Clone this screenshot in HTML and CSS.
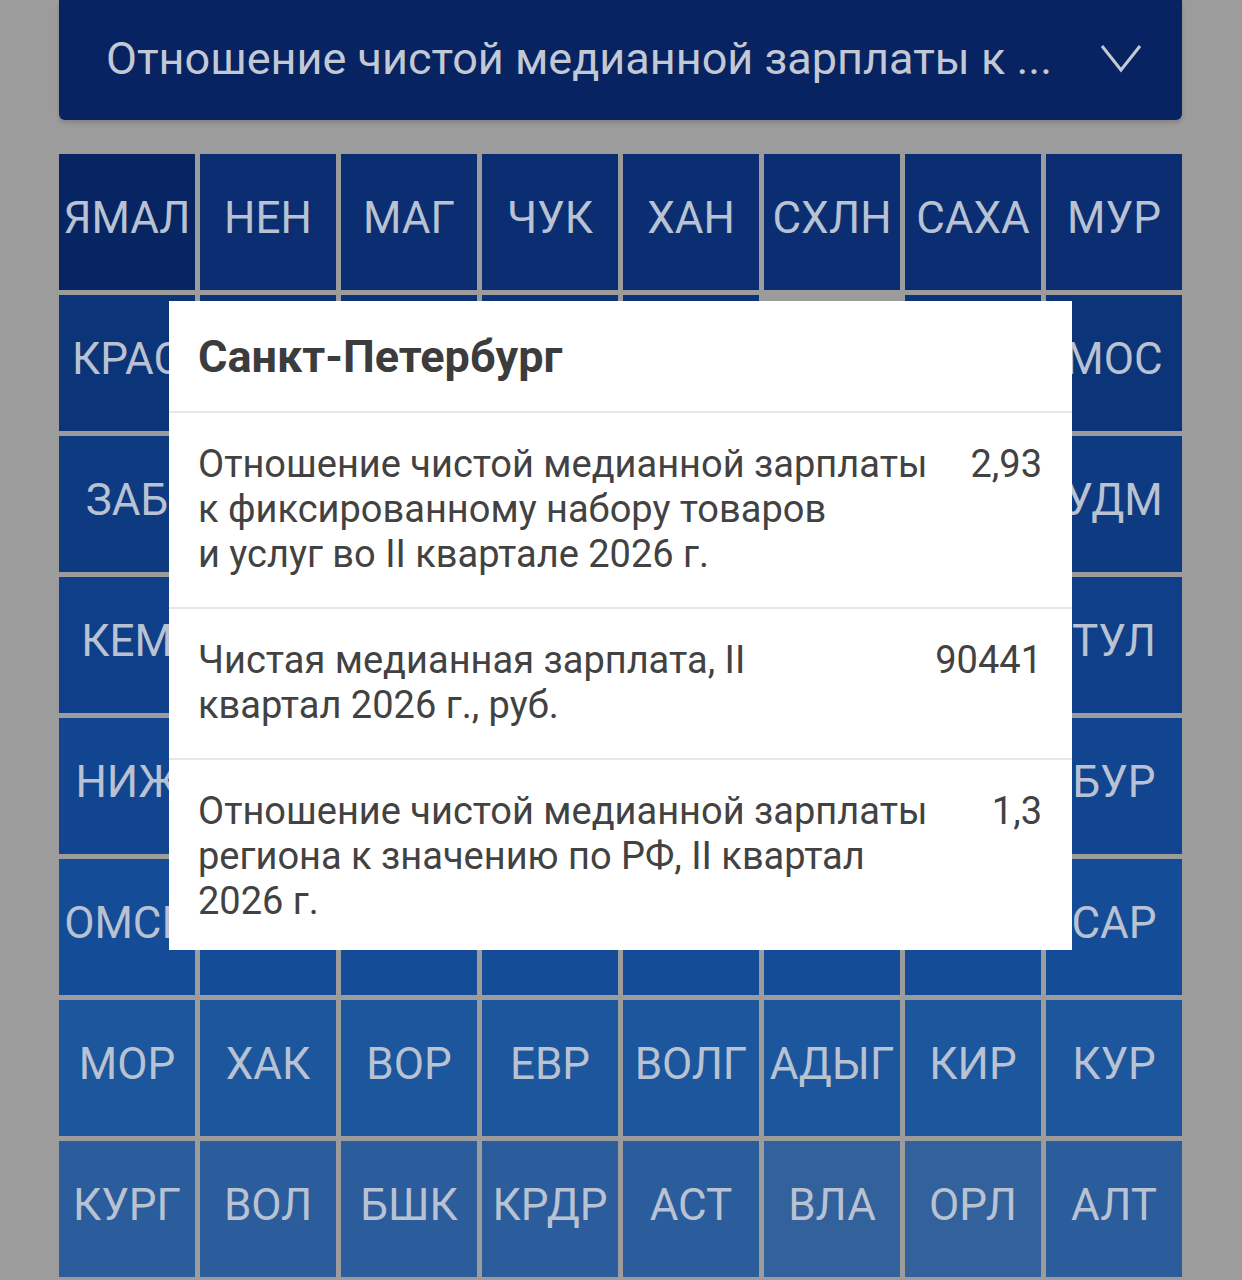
FILE: index.html
```html
<!DOCTYPE html>
<html lang="ru">
<head>
    <meta charset="UTF-8">
    <meta name="viewport" content="width=device-width, initial-scale=1.0">
    <title>Зарплаты по регионам</title>
    <link rel="stylesheet" href="styles.css">
</head>
<body>
    <div class="screen">
        <div class="select-bar">
            <span class="select-text">Отношение чистой медианной зарплаты к ...</span>
            <svg class="chevron" width="42" height="30" viewBox="0 0 42 30">
                <polyline points="2,3 21,27 40,3" fill="none" stroke="currentColor" stroke-width="3"/>
            </svg>
        </div>

        <div class="tiles">
            <div class="tile lvl-0">ЯМАЛ</div>
            <div class="tile lvl-1">НЕН</div>
            <div class="tile lvl-1">МАГ</div>
            <div class="tile lvl-1">ЧУК</div>
            <div class="tile lvl-1">ХАН</div>
            <div class="tile lvl-1">СХЛН</div>
            <div class="tile lvl-1">САХА</div>
            <div class="tile lvl-1">МУР</div>

            <div class="tile lvl-2">КРАС</div>
            <div class="tile lvl-2">ТЮМ</div>
            <div class="tile lvl-2">КАМ</div>
            <div class="tile lvl-2">МСК</div>
            <div class="tile lvl-2">КОМИ</div>
            <div class="tile selected">СПБ</div>
            <div class="tile lvl-2">ЛЕН</div>
            <div class="tile lvl-2">МОС</div>

            <div class="tile lvl-3">ЗАБ</div>
            <div class="tile lvl-3">ИРК</div>
            <div class="tile lvl-3">ТОМ</div>
            <div class="tile lvl-3">КАР</div>
            <div class="tile lvl-3">АРХ</div>
            <div class="tile lvl-3">ТАТ</div>
            <div class="tile lvl-3">СВЕР</div>
            <div class="tile lvl-3">УДМ</div>

            <div class="tile lvl-4">КЕМ</div>
            <div class="tile lvl-4">НОВ</div>
            <div class="tile lvl-4">КАЛ</div>
            <div class="tile lvl-4">ПЕРМ</div>
            <div class="tile lvl-4">ЧЕЛ</div>
            <div class="tile lvl-4">ВЛГ</div>
            <div class="tile lvl-4">КЛГ</div>
            <div class="tile lvl-4">ТУЛ</div>

            <div class="tile lvl-5">НИЖ</div>
            <div class="tile lvl-5">ЯРО</div>
            <div class="tile lvl-5">САМ</div>
            <div class="tile lvl-5">ЛИП</div>
            <div class="tile lvl-5">ПРИМ</div>
            <div class="tile lvl-5">ХАБ</div>
            <div class="tile lvl-5">АМУР</div>
            <div class="tile lvl-5">БУР</div>

            <div class="tile lvl-6">ОМСК</div>
            <div class="tile lvl-6">БЕЛ</div>
            <div class="tile lvl-6">ТВЕР</div>
            <div class="tile lvl-6">РЯЗ</div>
            <div class="tile lvl-6">ВЛАД</div>
            <div class="tile lvl-6">ОРЕН</div>
            <div class="tile lvl-6">ПСК</div>
            <div class="tile lvl-6">САР</div>

            <div class="tile lvl-7">МОР</div>
            <div class="tile lvl-7">ХАК</div>
            <div class="tile lvl-7">ВОР</div>
            <div class="tile lvl-7">ЕВР</div>
            <div class="tile lvl-7">ВОЛГ</div>
            <div class="tile lvl-7">АДЫГ</div>
            <div class="tile lvl-7">КИР</div>
            <div class="tile lvl-7">КУР</div>

            <div class="tile lvl-8">КУРГ</div>
            <div class="tile lvl-8">ВОЛ</div>
            <div class="tile lvl-8">БШК</div>
            <div class="tile lvl-8">КРДР</div>
            <div class="tile lvl-8">АСТ</div>
            <div class="tile lvl-9">ВЛА</div>
            <div class="tile lvl-9">ОРЛ</div>
            <div class="tile lvl-8">АЛТ</div>
        </div>

        <!-- region popup -->
        <div class="dialog">
            <div class="dialog-title">Санкт-Петербург</div>
            <div class="dialog-row">
                <div class="row-label">Отношение чистой медианной зарплаты к&nbsp;фиксированному набору товаров и&nbsp;услуг во&nbsp;II квартале 2026&nbsp;г.</div>
                <div class="row-value">2,93</div>
            </div>
            <div class="dialog-row">
                <div class="row-label">Чистая медианная зарплата, II квартал 2026&nbsp;г., руб.</div>
                <div class="row-value">90441</div>
            </div>
            <div class="dialog-row">
                <div class="row-label">Отношение чистой медианной зарплаты региона к&nbsp;значению по&nbsp;РФ, II квартал 2026&nbsp;г.</div>
                <div class="row-value">1,3</div>
            </div>
        </div>
    </div>
</body>
</html>
```

FILE: styles.css
```css
body {
    margin: 0;
    background-color: #9c9c9c;
    font-family: Roboto, "Noto Sans", sans-serif;
}
.screen {
    position: relative;
    height: 1280px;
    overflow: hidden;
    padding: 0 60px 0 59px;
}
.select-bar {
    display: flex;
    align-items: center;
    justify-content: space-between;
    height: 120px;
    padding: 0 40px 0 47px;
    background-color: #082362;
    border-radius: 0 0 6px 6px;
    box-shadow: 0 3px 4px rgba(0, 0, 0, 0.15);
    color: #c3c9d4;
}
.select-text {
    font-size: 45px;
    white-space: nowrap;
    margin-bottom: 3px;
}
.chevron {
    display: block;
    margin-bottom: 4px;
}
.tiles {
    display: grid;
    grid-template-columns: repeat(8, 136px);
    grid-auto-rows: 136px;
    gap: 5px;
    margin-top: 34px;
}
.tile {
    display: flex;
    align-items: center;
    justify-content: center;
    overflow: hidden;
    white-space: nowrap;
    padding-bottom: 8px;
    box-sizing: border-box;
    font-size: 44px;
    color: #b9c2d2;
}
.tile.lvl-0 { background-color: #072562; }
.tile.lvl-1 { background-color: #0a2e71; }
.tile.lvl-2 { background-color: #0c3478; }
.tile.lvl-3 { background-color: #0e3a81; }
.tile.lvl-4 { background-color: #0f3f88; }
.tile.lvl-5 { background-color: #12458f; }
.tile.lvl-6 { background-color: #154c97; }
.tile.lvl-7 { background-color: #1c569c; }
.tile.lvl-8 { background-color: #2b5c9c; }
.tile.lvl-9 { background-color: #33619b; }
.tile.selected {
    background-color: #9c9c9c;
}
.dialog {
    position: absolute;
    left: 169px;
    top: 301px;
    width: 903px;
    background: white;
    color: #424242;
}
.dialog-title {
    display: flex;
    align-items: center;
    height: 110px;
    padding: 0 29px;
    font-size: 45px;
    font-weight: bold;
    color: #3c3c3c;
    border-bottom: 2px solid #e8e8e8;
}
.dialog-row {
    display: flex;
    justify-content: space-between;
    gap: 40px;
    padding: 29px 30px 30px 29px;
    font-size: 38px;
    line-height: 45px;
    border-bottom: 2px solid #e8e8e8;
}
.dialog-row:last-child {
    padding-bottom: 26px;
    border-bottom: none;
}
.row-value {
    white-space: nowrap;
}
```
